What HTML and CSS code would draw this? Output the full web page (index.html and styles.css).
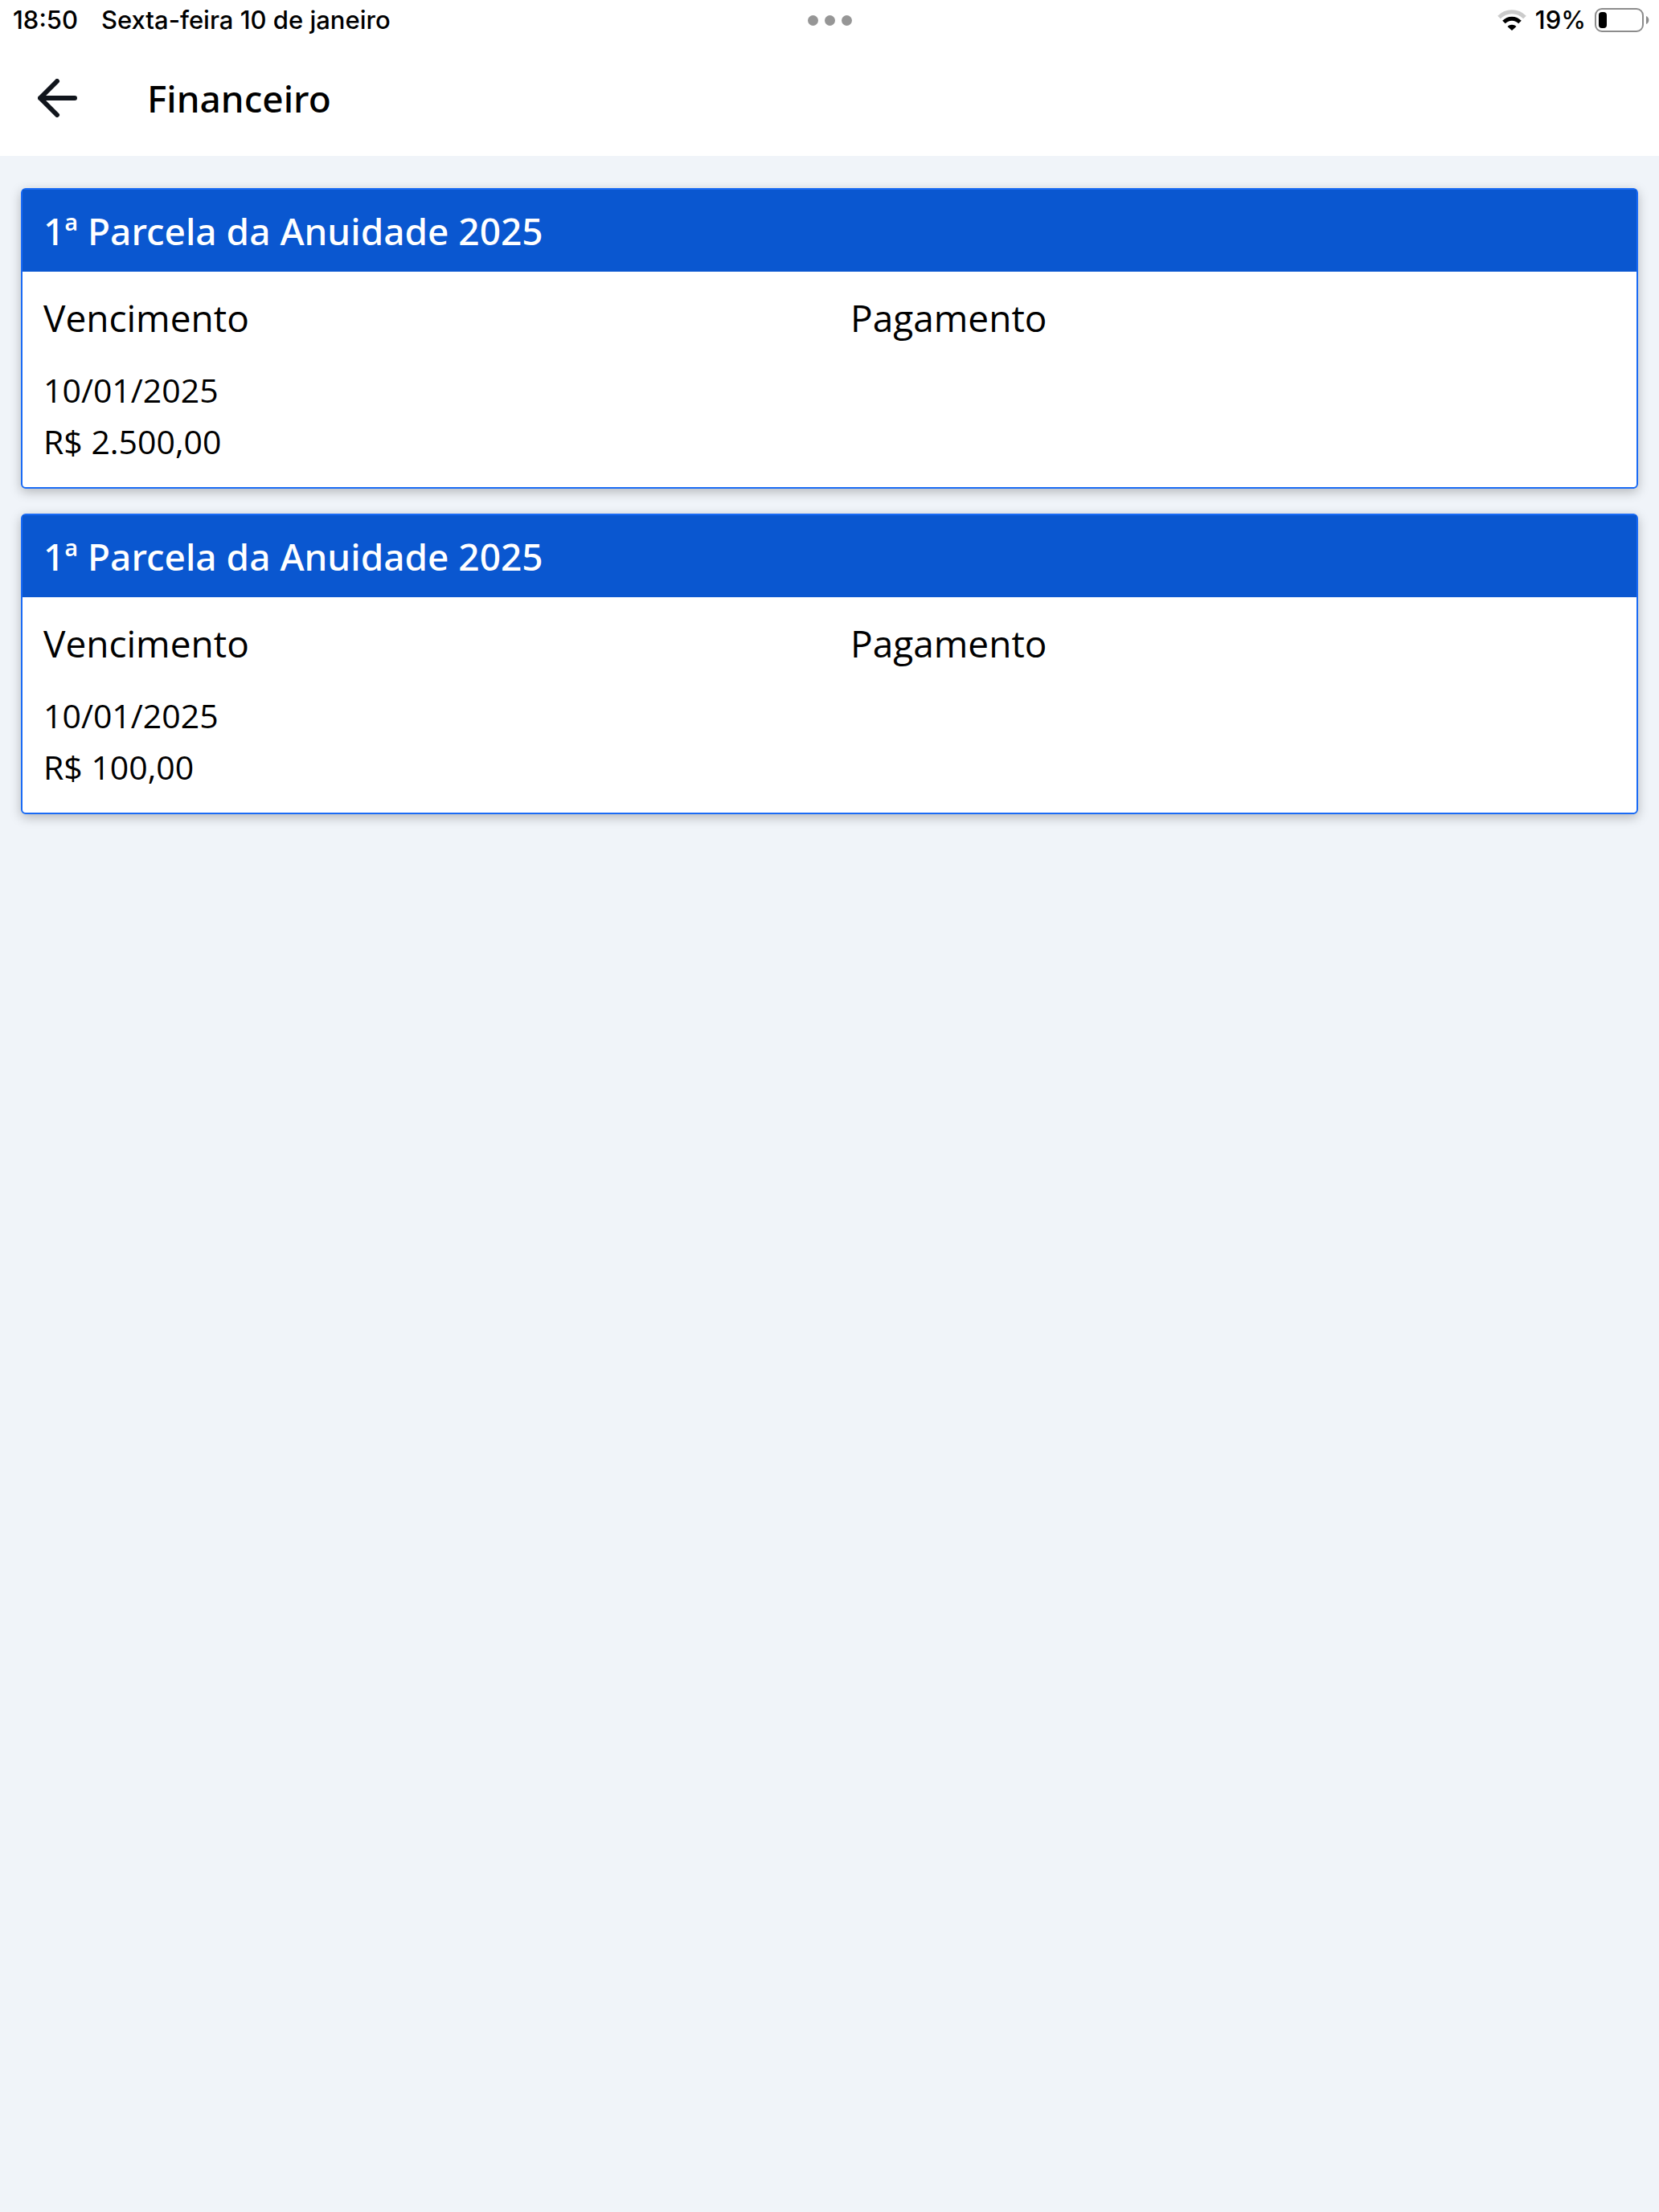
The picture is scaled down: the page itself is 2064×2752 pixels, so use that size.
FILE: index.html
```html
<!DOCTYPE html>
<html lang="pt-BR">

<head>
    <meta charset="UTF-8">
    <meta name="viewport" content="width=device-width, initial-scale=1.0">
    <title>Financeiro</title>
    <link rel="stylesheet" href="styles.css">
</head>

<body>
    <div class="status">
        <div class="status-left">
            <span>18:50</span>
            <span>Sexta-feira 10 de janeiro</span>
        </div>
        <div class="dots"><i></i><i></i><i></i></div>
        <div class="status-right">
            <svg class="wifi" width="36" height="26" viewBox="0 0 36 26">
                <path d="M2 9.5C11 .5 25 .5 34 9.5" fill="none" stroke="#cbcbcb" stroke-width="5" />
                <path d="M8 15.5C13.500 9.700 22.500 9.700 28 15.500" fill="none" stroke="#000" stroke-width="5" />
                <path d="M12.500 21C15.500 18 20.500 18 23.500 21L18 26Z" fill="#000" />
            </svg>
            <span>19%</span>
            <svg class="battery" width="68" height="32" viewBox="0 0 68 32">
                <rect x="1" y="2" width="59" height="28" rx="8" fill="none" stroke="#8c8c8c" stroke-width="2" />
                <rect x="5" y="6" width="10" height="20" rx="4" fill="#000" />
                <path d="M64 11C68.500 12.500 68.500 19.500 64 21Z" fill="#8c8c8c" />
            </svg>
        </div>
    </div>

    <div class="header">
        <a class="back" href="#" aria-label="Voltar">
            <svg width="50" height="48" viewBox="0 0 50 48">
                <path d="M24 3L3 24L24 45M3 24H46" fill="none" stroke="#11151c" stroke-width="6" stroke-linecap="round" stroke-linejoin="round" />
            </svg>
        </a>
        <h1 class="title">Financeiro</h1>
    </div>

    <!-- parcelas -->
    <div class="list">
        <div class="card">
            <h2 class="card-title">1ª Parcela da Anuidade 2025</h2>
            <div class="card-body">
                <div class="col">
                    <h3>Vencimento</h3>
                    <p>10/01/2025</p>
                    <p>R$ 2.500,00</p>
                </div>
                <div class="col">
                    <h3>Pagamento</h3>
                </div>
            </div>
        </div>

        <div class="card">
            <h2 class="card-title">1ª Parcela da Anuidade 2025</h2>
            <div class="card-body">
                <div class="col">
                    <h3>Vencimento</h3>
                    <p>10/01/2025</p>
                    <p>R$ 100,00</p>
                </div>
                <div class="col">
                    <h3>Pagamento</h3>
                </div>
            </div>
        </div>
    </div>
</body>

</html>
```
FILE: styles.css
```css
* {
    margin: 0;
    padding: 0;
    box-sizing: border-box;
}

body {
    background-color: #f0f4f9;
    color: #000000;
    font-family: "Open Sans", "Noto Sans", sans-serif;
    font-size: 41px;
    line-height: 64px;
}

svg {
    display: block;
}

.status {
    display: grid;
    grid-template-columns: 1fr auto 1fr;
    align-items: center;
    height: 50px;
    padding: 0 12px;
    background-color: #ffffff;
    font-family: Inter, "Liberation Sans", sans-serif;
    font-size: 31px;
    font-weight: 500;
    line-height: 50px;
}

.status-left {
    display: flex;
    gap: 29px;
    padding-left: 4px;
}

.dots {
    display: flex;
    gap: 8px;
}

.dots i {
    width: 13px;
    height: 13px;
    border-radius: 50%;
    background-color: #969696;
}

.status-right {
    display: flex;
    justify-content: flex-end;
    align-items: center;
    gap: 11px;
}

.header {
    display: flex;
    align-items: center;
    gap: 86px;
    height: 144px;
    padding: 0 47px;
    background-color: #ffffff;
}

.title,
.card-title {
    font-family: "Noto Sans", sans-serif;
    font-size: 46px;
    font-weight: 500;
}

.list {
    display: flex;
    flex-direction: column;
    gap: 31px;
    padding: 40px 26px;
}

.card {
    border: 2px solid #1a6bf5;
    border-radius: 6px;
    background-color: #ffffff;
    box-shadow: 0 4px 14px rgba(0, 0, 0, .25);
}

.card-title {
    padding: 19px 26px;
    background-color: #0a57d0;
    color: #ffffff;
}

.card-body {
    display: grid;
    grid-template-columns: 1fr 1fr;
}

.col {
    padding: 25px 26px;
}

.col h3 {
    margin-bottom: 26px;
    font-size: 46px;
    font-weight: 400;
}
```
